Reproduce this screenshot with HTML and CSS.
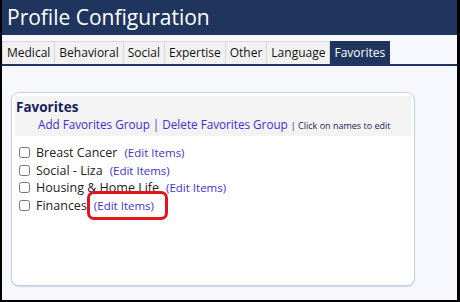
FILE: index.html
```html
<!DOCTYPE html>
<html lang="en">
<head>
    <meta charset="UTF-8">
    <title>Profile Configuration</title>
    <link rel="stylesheet" href="styles.css">
</head>
<body>
<div class="frame">
    <div class="title-bar">Profile Configuration</div>
    <div class="tabs">
        <span class="tab">Medical</span>
        <span class="tab">Behavioral</span>
        <span class="tab">Social</span>
        <span class="tab">Expertise</span>
        <span class="tab">Other</span>
        <span class="tab">Language</span>
        <span class="tab active">Favorites</span>
    </div>
    <div class="content">
        <div class="card">
            <div class="card-head">
                <h2>Favorites</h2>
                <div class="actions">
                    <a href="#">Add Favorites Group</a>
                    <span class="sep">|</span> <a href="#">Delete Favorites Group</a>
                    <span class="hint">| Click on names to edit</span>
                </div>
            </div>
            <ul class="groups">
                <li><input type="checkbox"> <span class="name">Breast Cancer</span> <a href="#">(Edit Items)</a></li>
                <li><input type="checkbox"> <span class="name">Social - Liza</span> <a href="#">(Edit Items)</a></li>
                <li><input type="checkbox"> <span class="name">Housing &amp; Home Life</span> <a href="#">(Edit Items)</a></li>
                <li><input type="checkbox"> <span class="name">Finances</span> <a href="#" class="marked">(Edit Items)</a></li>
            </ul>
        </div>
    </div>
</div>
</body>
</html>
```

FILE: styles.css
```css
html {
    background: #000;
}
body {
    margin: 0;
    padding: 0 3px 2px 2px;
    font-family: "Open Sans", "Noto Sans", sans-serif;
}
.frame {
    height: 300px;
    background: #f7f8fd;
    overflow: hidden;
}
.title-bar {
    height: 35px;
    background: #1f355e;
    color: #fff;
    font-size: 21px;
    line-height: 34px;
    padding-left: 5px;
}
.tabs {
    display: flex;
    padding-top: 6px;
    border-bottom: 2px solid #1f355e;
}
.tab {
    height: 22px;
    line-height: 22px;
    padding: 0 4px;
    font-size: 12px;
    color: #111;
    background: #f1f1f1;
    border: 1px solid #d8d8d8;
    border-bottom: 0;
    border-left: 0;
}
.tab:first-child {
    border-left: 1px solid #d8d8d8;
}
.tab.active {
    background: #1f355e;
    border-color: #1f355e;
    color: #fff;
}
.content {
    padding: 26px 0 0 9px;
}
.card {
    width: 396px;
    height: 186px;
    background: #fff;
    border: 1px solid #c9d1e1;
    border-radius: 8px;
    padding: 3px;
    box-shadow: 0 1px 1px rgba(150, 165, 195, 0.4);
}
.card-head {
    background: #f3f3f3;
    padding: 3px 0 2px 1px;
}
h2 {
    margin: 0;
    font-size: 13.5px;
    line-height: 17px;
    color: #1c1c5a;
}
.actions {
    padding-left: 22px;
    font-size: 11.7px;
    line-height: 17px;
}
a {
    color: #3d2fd6;
    text-decoration: none;
}
.sep {
    color: #3d2fd6;
}
.hint {
    font-size: 9px;
    color: #1c1c5a;
}
.groups {
    list-style: none;
    margin: 8px 0 0 0;
    padding: 0 0 0 3px;
}
.groups li {
    font-size: 12.5px;
    line-height: 17.5px;
    color: #222;
    display: flex;
    align-items: center;
    gap: 4px;
}
.groups input {
    margin: 0 2px 0 1px;
    width: 11px;
    height: 11px;
}
.groups a {
    font-size: 11.5px;
    margin-left: 3px;
}
.marked {
    position: relative;
}
.marked::after {
    content: "";
    position: absolute;
    left: -7px;
    right: -14px;
    top: -6px;
    bottom: -6px;
    border: 3px solid #e3141c;
    border-radius: 7px;
}
```
